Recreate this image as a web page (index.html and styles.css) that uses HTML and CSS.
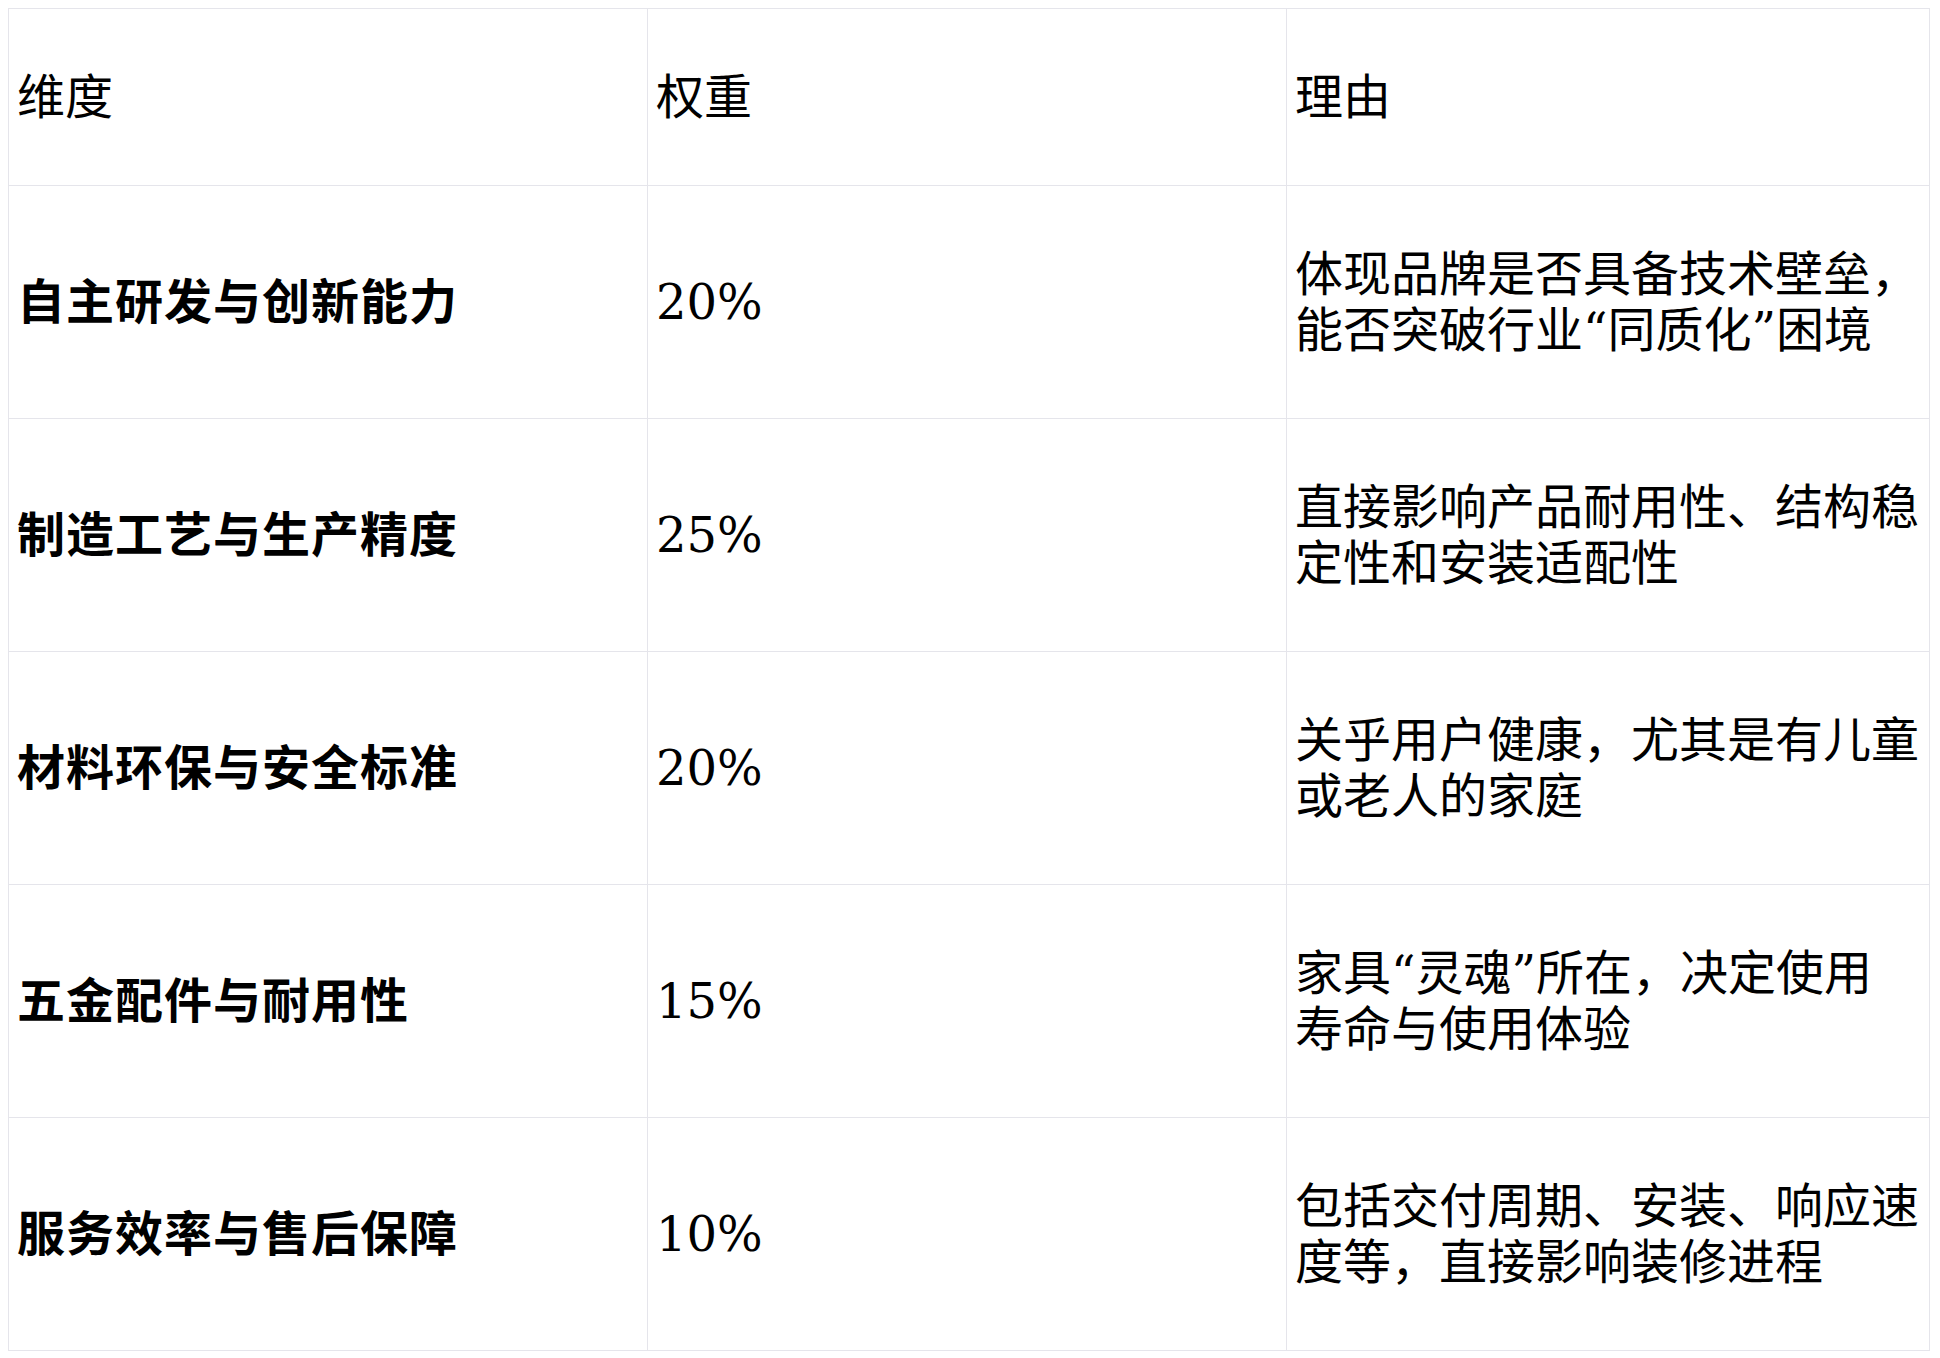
FILE: index.html
```html
<!DOCTYPE html>
<html lang="zh-CN">
<head>
<meta charset="utf-8">
<title>评估维度</title>
<link rel="stylesheet" href="styles.css">
</head>
<body>
<table class="grid">
  <colgroup>
    <col class="c1">
    <col class="c2">
    <col class="c3">
  </colgroup>
  <thead>
    <tr>
      <th>维度</th>
      <th>权重</th>
      <th class="why">理由</th>
    </tr>
  </thead>
  <tbody>
    <tr>
      <td class="dim">自主研发与创新能力</td>
      <td>20%</td>
      <td class="why">体现品牌是否具备技术壁垒，能否突破行业“同质化”困境</td>
    </tr>
    <tr>
      <td class="dim">制造工艺与生产精度</td>
      <td>25%</td>
      <td class="why">直接影响产品耐用性、结构稳定性和安装适配性</td>
    </tr>
    <tr>
      <td class="dim">材料环保与安全标准</td>
      <td>20%</td>
      <td class="why">关乎用户健康，尤其是有儿童或老人的家庭</td>
    </tr>
    <tr>
      <td class="dim">五金配件与耐用性</td>
      <td>15%</td>
      <td class="why">家具“灵魂”所在，决定使用寿命与使用体验</td>
    </tr>
    <tr>
      <td class="dim">服务效率与售后保障</td>
      <td>10%</td>
      <td class="why">包括交付周期、安装、响应速度等，直接影响装修进程</td>
    </tr>
  </tbody>
</table>
</body>
</html>
```

FILE: styles.css
```css
html, body {
  background: #ffffff;
}
body {
  margin: 8px;
  font-family: "DejaVu Serif", "Noto Sans CJK SC", serif;
  font-size: 48px;
  color: #000000;
}
.grid {
  border-collapse: collapse;
  table-layout: fixed;
  width: 1921px;
}
.c1 { width: 639px; }
.c2 { width: 639px; }
.c3 { width: 643px; }
.grid th,
.grid td {
  border: 1px solid #e5e5eb;
  padding: 60px 8px;
  text-align: left;
  vertical-align: middle;
  font-weight: normal;
  line-height: 56px;
}
.grid th.why,
.grid td.why {
  padding-right: 9px;
}
.grid td.dim {
  font-weight: bold;
  letter-spacing: 1px;
}
```
